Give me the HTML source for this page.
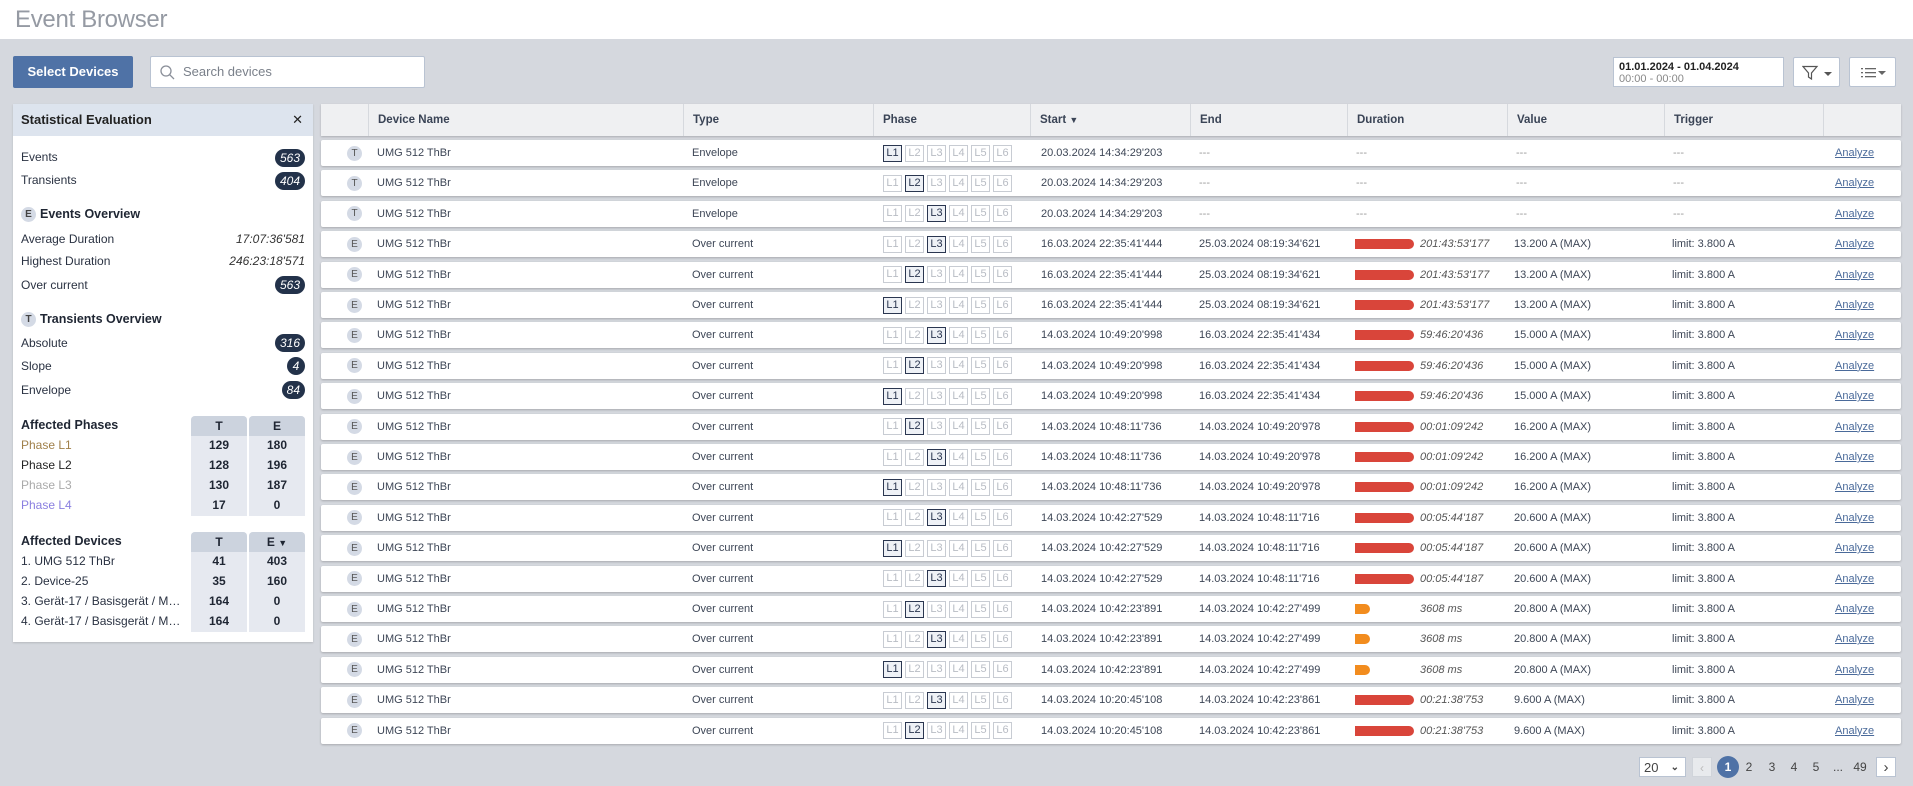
<!DOCTYPE html>
<html><head><meta charset="utf-8"><style>
*{box-sizing:border-box;margin:0;padding:0}
body{width:1913px;height:786px;background:#d5d8de;font-family:"Liberation Sans",sans-serif;color:#333d4b;position:relative;overflow:hidden}
.abs{position:absolute}
#top{left:0;top:0;width:1913px;height:39px;background:#fff}
#title{left:15px;top:6px;font-size:24px;font-weight:300;color:#959aa3;letter-spacing:-0.3px}
#sel{left:13px;top:56px;width:120px;height:32px;background:#4f72a6;color:#fff;font-weight:bold;font-size:13px;line-height:32px;text-align:center;border-radius:2px}
#search{left:150px;top:56px;width:275px;height:32px;background:#fff;border:1px solid #b9c3d2;border-radius:2px;font-size:13px;color:#7a808a;line-height:30px;padding-left:32px}
#date{left:1613px;top:57px;width:171px;height:30px;background:#fff;border:1px solid #b9c3d2;font-size:11px;padding:3px 5px;line-height:12px}
.btn{top:57px;width:47px;height:30px;background:#fff;border:1px solid #b9c3d2;border-radius:2px}
#panel{left:13px;top:104px;width:300px;height:538px;background:#fff;box-shadow:0 1px 2px rgba(0,0,0,.15)}
#ph{left:0;top:0;width:300px;height:32px;background:#dde4ee;font-weight:bold;font-size:13px;line-height:32px;padding-left:8px;color:#222}
.pl{position:absolute;left:8px;font-size:12px;color:#2a3242}
.pb{font-weight:bold;font-size:12.5px;color:#1f2633}
.badge{position:absolute;right:8px;height:18px;min-width:18px;padding:0 5px;border-radius:9px;background:#23324a;color:#fff;font-style:italic;font-size:12px;line-height:18px;text-align:center}
.pv{position:absolute;right:8px;font-style:italic;font-size:12px;color:#333}
.ci{display:inline-block;width:15px;height:15px;border-radius:50%;background:#d4dae5;color:#444;font-size:10px;font-weight:bold;line-height:15px;text-align:center;vertical-align:middle;margin-right:4px}
.tc{position:absolute;width:56px;text-align:center;font-weight:bold;font-size:12px;color:#1f2633}
#thead{left:321px;top:104px;width:1580px;height:32px;background:#eff0f2;box-shadow:0 1px 2px rgba(0,0,0,.2)}
.th{position:absolute;top:0;height:32px;line-height:32px;font-weight:bold;font-size:11.5px;color:#3a4456;padding-left:9px;border-left:1px solid #d6d9de}
.row{position:absolute;left:321px;width:1580px;height:26px;background:#fff;border-radius:2px;box-shadow:0 1px 2px rgba(0,0,0,.22);font-size:11px;line-height:26px;color:#3d4656}
.row span{position:absolute;top:0;white-space:nowrap}
.ic{top:5.5px!important;left:26px;width:15px;height:15px;border-radius:50%;background:#d4dae5;color:#555;font-size:10px;line-height:15px!important;text-align:center}
.ph{top:4.5px!important;width:19px;height:17px;border:1px solid #c8ccd3;color:#b8bcc4;font-size:11px;line-height:15px;text-align:center}
.ph.a{border-color:#2a3650;background:#eef1f6;color:#2a3650}
.dash{color:#999}
.bar{top:8px!important;height:10px;background:#d9453a;border-radius:0 5px 5px 0}
.bar.o{background:#f28c1e}
.it{font-style:italic;color:#555}
.an{color:#4a6a9a;text-decoration:underline}
.pg{position:absolute;top:757px;height:20px;font-size:12px;line-height:20px;text-align:center;color:#444}
</style></head><body>
<div id="top" class="abs"></div>
<div id="title" class="abs">Event Browser</div>
<div id="sel" class="abs">Select Devices</div>
<div id="search" class="abs"><svg class="abs" style="left:9px;top:8px" width="15" height="15" viewBox="0 0 15 15"><circle cx="6" cy="6" r="5" fill="none" stroke="#8a8f99" stroke-width="1.3"/><line x1="9.7" y1="9.7" x2="14" y2="14" stroke="#8a8f99" stroke-width="1.3"/></svg>Search devices</div>
<div id="date" class="abs"><div style="font-weight:bold;color:#222">01.01.2024 - 01.04.2024</div><div style="color:#888">00:00 - 00:00</div></div>
<div class="btn abs" style="left:1793px"><svg class="abs" style="left:8px;top:7px" width="32" height="16" viewBox="0 0 32 16"><path d="M1 1.5h14l-5.5 6.5v6l-3-2v-4z" fill="none" stroke="#555" stroke-width="1.2"/><path d="M22 7h8l-4 4z" fill="#555"/></svg></div>
<div class="btn abs" style="left:1849px"><svg class="abs" style="left:10px;top:7px" width="30" height="16" viewBox="0 0 30 16"><g fill="#666"><rect x="1" y="3" width="2" height="1.3"/><rect x="1" y="7" width="2" height="1.3"/><rect x="1" y="11" width="2" height="1.3"/><rect x="5" y="3" width="11" height="1.3"/><rect x="5" y="7" width="11" height="1.3"/><rect x="5" y="11" width="11" height="1.3"/><path d="M18 6h8l-4 4z"/></g></svg></div>

<div id="panel" class="abs">
<div id="ph" class="abs">Statistical Evaluation<span style="position:absolute;right:10px;top:0;font-weight:normal;font-size:13px">✕</span></div>
<div class="pl" style="top:46px">Events</div><div class="badge" style="top:45px">563</div>
<div class="pl" style="top:69px">Transients</div><div class="badge" style="top:68px">404</div>
<div class="pl pb" style="top:103px"><span class="ci">E</span>Events Overview</div>
<div class="pl" style="top:128px">Average Duration</div><div class="pv" style="top:128px">17:07:36'581</div>
<div class="pl" style="top:150px">Highest Duration</div><div class="pv" style="top:150px">246:23:18'571</div>
<div class="pl" style="top:174px">Over current</div><div class="badge" style="top:172px">563</div>
<div class="pl pb" style="top:208px"><span class="ci">T</span>Transients Overview</div>
<div class="pl" style="top:232px">Absolute</div><div class="badge" style="top:230px">316</div>
<div class="pl" style="top:255px">Slope</div><div class="badge" style="top:253px">4</div>
<div class="pl" style="top:279px">Envelope</div><div class="badge" style="top:277px">84</div>

<div class="abs" style="left:178px;top:312px;width:56px;height:100px;background:#e6e9f0;border-radius:4px 4px 0 0"></div>
<div class="abs" style="left:236px;top:312px;width:56px;height:100px;background:#e6e9f0;border-radius:4px 4px 0 0"></div>
<div class="abs" style="left:178px;top:312px;width:56px;height:20px;background:#ccd3de;border-radius:4px 4px 0 0"></div>
<div class="abs" style="left:236px;top:312px;width:56px;height:20px;background:#ccd3de;border-radius:4px 4px 0 0"></div>
<div class="pl pb" style="top:314px">Affected Phases</div>
<div class="tc" style="left:178px;top:315px">T</div><div class="tc" style="left:236px;top:315px">E</div>
<div class="pl" style="top:334px;color:#a0804a">Phase L1</div><div class="tc" style="left:178px;top:334px">129</div><div class="tc" style="left:236px;top:334px">180</div>
<div class="pl" style="top:354px;color:#222">Phase L2</div><div class="tc" style="left:178px;top:354px">128</div><div class="tc" style="left:236px;top:354px">196</div>
<div class="pl" style="top:374px;color:#aaa">Phase L3</div><div class="tc" style="left:178px;top:374px">130</div><div class="tc" style="left:236px;top:374px">187</div>
<div class="pl" style="top:394px;color:#8a7fe0">Phase L4</div><div class="tc" style="left:178px;top:394px">17</div><div class="tc" style="left:236px;top:394px">0</div>

<div class="abs" style="left:178px;top:428px;width:56px;height:100px;background:#e6e9f0;border-radius:4px 4px 0 0"></div>
<div class="abs" style="left:236px;top:428px;width:56px;height:100px;background:#e6e9f0;border-radius:4px 4px 0 0"></div>
<div class="abs" style="left:178px;top:428px;width:56px;height:20px;background:#ccd3de;border-radius:4px 4px 0 0"></div>
<div class="abs" style="left:236px;top:428px;width:56px;height:20px;background:#ccd3de;border-radius:4px 4px 0 0"></div>
<div class="pl pb" style="top:430px">Affected Devices</div>
<div class="tc" style="left:178px;top:431px">T</div><div class="tc" style="left:236px;top:431px">E <span style="font-size:9px">▼</span></div>
<div class="pl" style="top:450px">1. UMG 512 ThBr</div><div class="tc" style="left:178px;top:450px">41</div><div class="tc" style="left:236px;top:450px">403</div>
<div class="pl" style="top:470px">2. Device-25</div><div class="tc" style="left:178px;top:470px">35</div><div class="tc" style="left:236px;top:470px">160</div>
<div class="pl" style="top:490px">3. Gerät-17 / Basisgerät / M…</div><div class="tc" style="left:178px;top:490px">164</div><div class="tc" style="left:236px;top:490px">0</div>
<div class="pl" style="top:510px">4. Gerät-17 / Basisgerät / M…</div><div class="tc" style="left:178px;top:510px">164</div><div class="tc" style="left:236px;top:510px">0</div>
</div>

<div id="thead" class="abs">
<div class="th" style="left:47px;width:315px">Device Name</div>
<div class="th" style="left:362px;width:190px">Type</div>
<div class="th" style="left:552px;width:157px">Phase</div>
<div class="th" style="left:709px;width:160px">Start <span style="font-size:9px">▼</span></div>
<div class="th" style="left:869px;width:157px">End</div>
<div class="th" style="left:1026px;width:160px">Duration</div>
<div class="th" style="left:1186px;width:157px">Value</div>
<div class="th" style="left:1343px;width:159px">Trigger</div>
<div class="th" style="left:1502px;width:78px"></div>
</div>

<div id="rows"></div>
<script>
var D=[
["T","Envelope",1,"20.03.2024 14:34:29'203",null],
["T","Envelope",2,"20.03.2024 14:34:29'203",null],
["T","Envelope",3,"20.03.2024 14:34:29'203",null],
["E","Over current",3,"16.03.2024 22:35:41'444",["25.03.2024 08:19:34'621","r","201:43:53'177","13.200 A (MAX)"]],
["E","Over current",2,"16.03.2024 22:35:41'444",["25.03.2024 08:19:34'621","r","201:43:53'177","13.200 A (MAX)"]],
["E","Over current",1,"16.03.2024 22:35:41'444",["25.03.2024 08:19:34'621","r","201:43:53'177","13.200 A (MAX)"]],
["E","Over current",3,"14.03.2024 10:49:20'998",["16.03.2024 22:35:41'434","r","59:46:20'436","15.000 A (MAX)"]],
["E","Over current",2,"14.03.2024 10:49:20'998",["16.03.2024 22:35:41'434","r","59:46:20'436","15.000 A (MAX)"]],
["E","Over current",1,"14.03.2024 10:49:20'998",["16.03.2024 22:35:41'434","r","59:46:20'436","15.000 A (MAX)"]],
["E","Over current",2,"14.03.2024 10:48:11'736",["14.03.2024 10:49:20'978","r","00:01:09'242","16.200 A (MAX)"]],
["E","Over current",3,"14.03.2024 10:48:11'736",["14.03.2024 10:49:20'978","r","00:01:09'242","16.200 A (MAX)"]],
["E","Over current",1,"14.03.2024 10:48:11'736",["14.03.2024 10:49:20'978","r","00:01:09'242","16.200 A (MAX)"]],
["E","Over current",3,"14.03.2024 10:42:27'529",["14.03.2024 10:48:11'716","r","00:05:44'187","20.600 A (MAX)"]],
["E","Over current",1,"14.03.2024 10:42:27'529",["14.03.2024 10:48:11'716","r","00:05:44'187","20.600 A (MAX)"]],
["E","Over current",3,"14.03.2024 10:42:27'529",["14.03.2024 10:48:11'716","r","00:05:44'187","20.600 A (MAX)"]],
["E","Over current",2,"14.03.2024 10:42:23'891",["14.03.2024 10:42:27'499","o","3608 ms","20.800 A (MAX)"]],
["E","Over current",3,"14.03.2024 10:42:23'891",["14.03.2024 10:42:27'499","o","3608 ms","20.800 A (MAX)"]],
["E","Over current",1,"14.03.2024 10:42:23'891",["14.03.2024 10:42:27'499","o","3608 ms","20.800 A (MAX)"]],
["E","Over current",3,"14.03.2024 10:20:45'108",["14.03.2024 10:42:23'861","r","00:21:38'753","9.600 A (MAX)"]],
["E","Over current",2,"14.03.2024 10:20:45'108",["14.03.2024 10:42:23'861","r","00:21:38'753","9.600 A (MAX)"]]];
var h="";
D.forEach(function(d,i){
var top=140+i*30.4;
var s='<div class="row" style="top:'+top+'px"><span class="ic">'+d[0]+'</span><span style="left:56px">UMG 512 ThBr</span><span style="left:371px">'+d[1]+'</span>';
for(var k=1;k<=6;k++){s+='<span class="ph'+(k==d[2]?' a':'')+'" style="left:'+(562+(k-1)*22)+'px">L'+k+'</span>';}
s+='<span style="left:720px">'+d[3]+'</span>';
if(!d[4]){s+='<span class="dash" style="left:878px">---</span><span class="dash" style="left:1035px">---</span><span class="dash" style="left:1195px">---</span><span class="dash" style="left:1352px">---</span>';}
else{var e=d[4];s+='<span style="left:878px">'+e[0]+'</span><span class="bar'+(e[1]=="o"?' o':'')+'" style="left:1034px;width:'+(e[1]=="o"?15:59)+'px"></span><span class="it" style="left:1099px">'+e[2]+'</span><span style="left:1193px">'+e[3]+'</span><span style="left:1351px">limit: 3.800 A</span>';}
s+='<span class="an" style="left:1514px">Analyze</span></div>';h+=s;});
document.getElementById("rows").innerHTML=h;
</script>

<div class="pg" style="left:1639px;width:47px;background:#fff;border:1px solid #b9c3d2;text-align:left;padding-left:4px;font-size:13px">20<span style="position:absolute;right:6px;top:0;font-size:10px;font-weight:bold">⌄</span></div>
<div class="pg" style="left:1692px;width:20px;background:#e8eaed;border:1px solid #d0d4da;color:#bbb">‹</div>
<div class="pg" style="left:1717px;top:756px;width:22px;height:22px;line-height:22px;border-radius:50%;background:#4f72a6;color:#fff;font-weight:bold">1</div>
<div class="pg" style="left:1743px;width:12px">2</div>
<div class="pg" style="left:1766px;width:12px">3</div>
<div class="pg" style="left:1788px;width:12px">4</div>
<div class="pg" style="left:1810px;width:12px">5</div>
<div class="pg" style="left:1830px;width:16px">...</div>
<div class="pg" style="left:1852px;width:16px">49</div>
<div class="pg" style="left:1876px;width:20px;background:#fff;border:1px solid #b9c3d2;font-size:15px">›</div>
</body></html>
